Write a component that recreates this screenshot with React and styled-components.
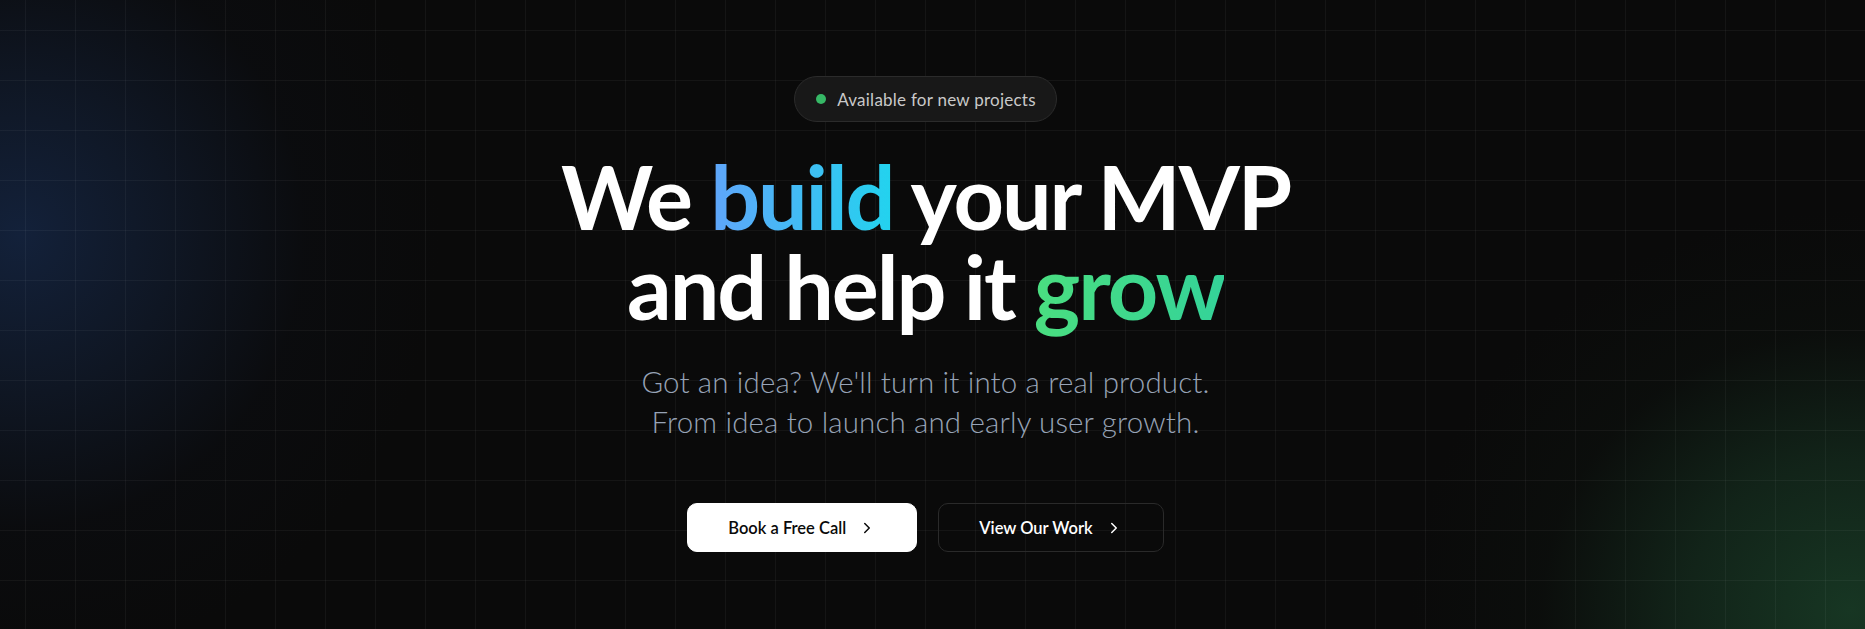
import React from "react";
import styled, { createGlobalStyle } from "styled-components";
import { ChevronRight } from "lucide-react";

const GlobalStyle = createGlobalStyle`
  html, body { margin: 0; padding: 0; background: #0a0a0a; }
  body { font-family: "Lato", "Inter", sans-serif; -webkit-font-smoothing: antialiased; }
  * { box-sizing: border-box; }
`;

const Hero = styled.section`
  position: relative;
  min-height: 629px;
  overflow: hidden;
  display: flex;
  flex-direction: column;
  align-items: center;
  padding: 76px 14px 0 0;
  background-color: #0a0a0a;
  background-image:
    linear-gradient(to right, rgba(255, 255, 255, 0.045) 1px, transparent 1px),
    linear-gradient(to bottom, rgba(255, 255, 255, 0.045) 1px, transparent 1px),
    radial-gradient(ellipse 420px 430px at 20px 235px, rgba(19, 33, 58, 1) 0%, rgba(17, 27, 45, 0.75) 35%, rgba(12, 15, 22, 0.35) 68%, rgba(10, 10, 10, 0) 100%),
    radial-gradient(ellipse 440px 400px at 1850px 610px, rgba(23, 54, 35, 1) 0%, rgba(21, 46, 31, 0.7) 38%, rgba(14, 22, 16, 0.3) 70%, rgba(10, 10, 10, 0) 100%);
  background-size: 50px 50px, 50px 50px, 100% 100%, 100% 100%;
  background-position: 25px 30px, 25px 30px, 0 0, 0 0;
`;

const Badge = styled.div`
  display: inline-flex;
  align-items: center;
  gap: 11px;
  height: 46px;
  padding: 0 20px 0 21px;
  border-radius: 999px;
  background: #181818;
  border: 1px solid #2b2b2b;
  color: #c9c9c9;
  font-size: 17px;
  letter-spacing: 0.25px;
  font-weight: 400;
`;

const Dot = styled.span`
  width: 10px;
  height: 10px;
  border-radius: 50%;
  background: #36b866;
`;

const Heading = styled.h1`
  margin: 29px 0 0;
  font-size: 88px;
  line-height: 90px;
  font-weight: 700;
  color: #ffffff;
  text-align: center;
  letter-spacing: -2.1px;
`;

const GradientWord = styled.span`
  background: ${(p) => p.$gradient};
  -webkit-background-clip: text;
  background-clip: text;
  color: transparent;
`;

const Subtitle = styled.p`
  margin: 31px 0 0;
  font-size: 29.5px;
  line-height: 40px;
  font-weight: 300;
  letter-spacing: 0.15px;
  color: #97a3b6;
  text-align: center;
`;

const Actions = styled.div`
  display: flex;
  gap: 21px;
  margin-top: 61px;
`;

const Button = styled.a`
  display: inline-flex;
  align-items: center;
  justify-content: center;
  gap: 12px;
  height: 49px;
  padding: 0 40px;
  border-radius: 10px;
  font-size: 16.5px;
  font-weight: 600;
  text-decoration: none;
  cursor: pointer;
  background: ${(p) => (p.$primary ? "#ffffff" : "transparent")};
  color: ${(p) => (p.$primary ? "#0a0a0a" : "#ffffff")};
  border: 1px solid ${(p) => (p.$primary ? "#ffffff" : "#2a2a2a")};
`;

export default function App() {
  return (
    <>
      <GlobalStyle />
      <Hero>
        <Badge>
          <Dot />
          Available for new projects
        </Badge>
        <Heading>
          We{" "}
          <GradientWord $gradient="linear-gradient(90deg, #60a5fa, #22d3ee)">build</GradientWord>{" "}
          your MVP
          <br />
          and help it{" "}
          <GradientWord $gradient="linear-gradient(90deg, #4ade80, #34d399)">grow</GradientWord>
        </Heading>
        <Subtitle>
          Got an idea? We'll turn it into a real product.
          <br />
          From idea to launch and early user growth.
        </Subtitle>
        <Actions>
          <Button $primary>
            Book a Free Call
            <ChevronRight size={18} strokeWidth={2} />
          </Button>
          <Button>
            View Our Work
            <ChevronRight size={18} strokeWidth={2} />
          </Button>
        </Actions>
      </Hero>
    </>
  );
}
